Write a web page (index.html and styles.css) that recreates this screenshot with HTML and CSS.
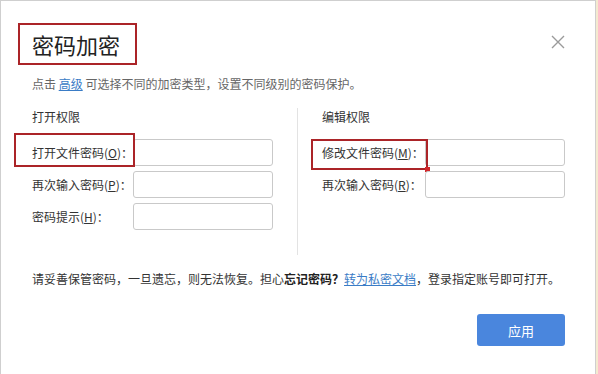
FILE: index.html
```html
<!DOCTYPE html>
<html lang="zh-CN">
  <head>
    <meta charset="UTF-8" />
    <meta name="viewport" content="width=device-width, initial-scale=1.0" />
    <title>密码加密</title>
    <link rel="stylesheet" href="styles.css">
  </head>
  <body>
    <div class="window">
      <div class="dialog">
        <div class="dialog-head">
          <h1 class="dialog-title">密码加密</h1>
          <button class="close" aria-label="关闭">
            <svg width="14" height="14" viewBox="0 0 14 14">
              <path d="M1 1 L13 13 M13 1 L1 13" stroke="#9a9a9a" stroke-width="1.4" fill="none" />
            </svg>
          </button>
        </div>

        <p class="tip">点击 <a href="#">高级</a> 可选择不同的加密类型，设置不同级别的密码保护。</p>

        <div class="perms">
          <div class="perm perm-open">
            <h2>打开权限</h2>
            <div class="field">
              <span class="mark mark-open"></span>
              <label for="openPwd">打开文件密码(<u>O</u>)：</label>
              <input type="password" id="openPwd" />
            </div>
            <div class="field">
              <label for="openPwd2">再次输入密码(<u>P</u>)：</label>
              <input type="password" id="openPwd2" />
            </div>
            <div class="field">
              <label for="openHint">密码提示(<u>H</u>)：</label>
              <input type="text" id="openHint" />
            </div>
          </div>

          <div class="perm perm-edit">
            <h2>编辑权限</h2>
            <div class="field">
              <span class="mark mark-edit"></span>
              <label for="editPwd">修改文件密码(<u>M</u>)：</label>
              <input type="password" id="editPwd" />
            </div>
            <div class="field">
              <label for="editPwd2">再次输入密码(<u>R</u>)：</label>
              <input type="password" id="editPwd2" />
            </div>
          </div>
        </div>

        <p class="notice">请妥善保管密码，一旦遗忘，则无法恢复。担心<b>忘记密码？</b><a href="#">转为私密文档</a>，登录指定账号即可打开。</p>

        <div class="dialog-foot">
          <button class="btn-apply">应用</button>
        </div>
      </div>
      <div class="edge"></div>
    </div>
  </body>
</html>
```

FILE: styles.css
```css
/* Page */
body {
  margin: 0;
  background: #fff;
  font-family: "Noto Sans CJK SC", "Microsoft YaHei", sans-serif;
  color: #333;
}

.window {
  display: flex;
  width: 598px;
  height: 374px;
  overflow: hidden;
}

/* Dialog box */
.dialog {
  flex: 1;
  border: 1px solid #cfcfcf;
  border-bottom: none;
  padding: 22px 30px 0 31px;
}

.edge {
  width: 2px;
  background: #f4ead0; /* beige strip behind the dialog */
}

.dialog-head {
  display: flex;
  justify-content: space-between;
  align-items: flex-start;
}

.dialog-title {
  margin: 0 0 0 -14px;
  padding: 0 15px 0 12px;
  height: 38px;
  line-height: 38px;
  font-size: 22px;
  font-weight: normal;
  color: #222;
  border: 2px solid #ab2428; /* red annotation box */
}

.close {
  margin-top: 12px;
  padding: 0;
  border: none;
  background: none;
  cursor: pointer;
  width: 14px;
  height: 14px;
}

.tip {
  margin: 10px 0 0;
  font-size: 12px;
  line-height: 18px;
  color: #666;
}

.tip a,
.notice a {
  color: #3a7cc6;
  text-decoration: underline;
}

/* Two permission columns */
.perms {
  display: flex;
  margin-top: 15px;
}

.perm h2 {
  margin: 0 0 13px;
  font-size: 12px;
  line-height: 18px;
  font-weight: normal;
  color: #333;
}

.perm-open {
  width: 265px;
  height: 147px;
  border-right: 1px solid #e3e3e3;
}

.perm-edit {
  padding-left: 24px;
}

.field {
  position: relative;
  display: flex;
  align-items: center;
  margin-bottom: 5px;
}

.field label {
  width: 101px;
  font-size: 12px;
  color: #333;
  white-space: nowrap;
}

.perm-edit .field label {
  width: 103px;
}

.field input {
  width: 140px;
  height: 27px;
  box-sizing: border-box;
  border: 1px solid #c9c9c9;
  border-radius: 3px;
  padding: 0 6px;
  font-size: 12px;
}

.field input:focus {
  border-color: #4a86dd;
  outline: none;
}

/* Red annotation boxes drawn over the labels */
.mark {
  position: absolute;
  border: 2px solid #ab2428;
  box-sizing: border-box;
  pointer-events: none;
}

.mark-open {
  left: -18px;
  top: -6px;
  width: 121px;
  height: 34px;
}

.mark-edit {
  left: -11px;
  top: 0;
  width: 117px;
  height: 31px;
}

.mark-edit::after {
  content: "";
  position: absolute;
  right: -4px;
  bottom: -4px;
  width: 5px;
  height: 5px;
  background: #d1262b;
}

.notice {
  margin: 15px 0 0;
  font-size: 12px;
  line-height: 18px;
  color: #333;
}

.notice b {
  color: #222;
}

.dialog-foot {
  display: flex;
  justify-content: flex-end;
  margin-top: 26px;
}

.btn-apply {
  width: 88px;
  height: 32px;
  border: none;
  border-radius: 3px;
  background: #4a86dd;
  color: #fff;
  font-family: inherit;
  font-size: 13px;
  cursor: pointer;
}

.btn-apply:hover {
  background: #3b76cc;
}
```
